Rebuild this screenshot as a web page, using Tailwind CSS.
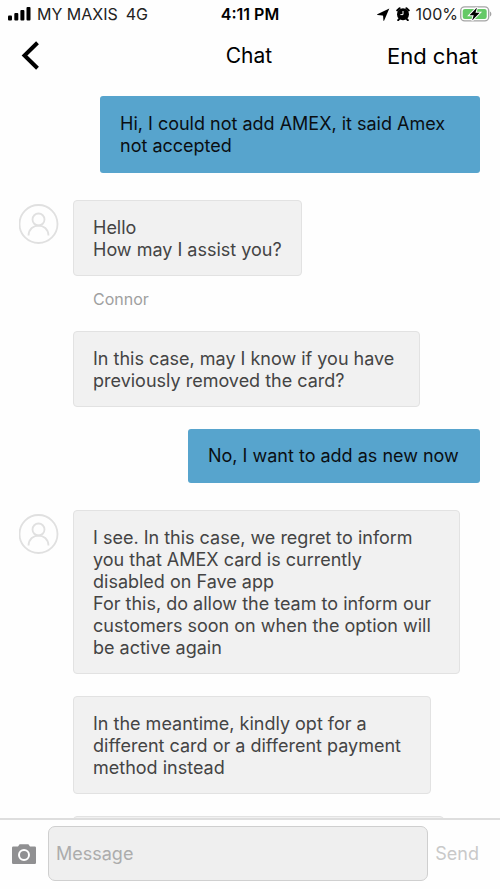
<!DOCTYPE html>
<html lang="en">
<head>
<meta charset="utf-8">
<meta name="viewport" content="width=device-width, initial-scale=1">
<title>Chat</title>
<script src="https://cdn.jsdelivr.net/npm/@tailwindcss/browser@4"></script>
</head>
<body class="flex h-screen flex-col overflow-hidden bg-[#fefefe] font-['Inter','Liberation_Sans',sans-serif] text-black">
  <div class="grid h-7 shrink-0 grid-cols-[1fr_auto_1fr] items-center px-2 text-base">
    <div class="flex items-center gap-[6px] text-[#222]">
      <svg class="h-[15px] w-[23px]" viewBox="0 0 23 15" fill="#000" aria-hidden="true"><rect x="0" y="8.500" width="4" height="5" rx="1"/><rect x="6.300" y="6" width="4" height="7.500" rx="1"/><rect x="12.400" y="3" width="4" height="10.500" rx="1"/><rect x="18.500" y="0" width="4" height="13.500" rx="1"/></svg>
      <span>MY MAXIS</span><span class="ml-[2px]">4G</span>
    </div>
    <div class="font-semibold">4:11 PM</div>
    <div class="flex items-center justify-end text-[#222]">
      <svg class="mr-[6px] h-[13px] w-[13px]" viewBox="0 0 13 13" aria-hidden="true"><path d="M12.300.5.300 6.300q-.4.600.3.700l4.900.4q.6 0 .6.600l.3 4.600q.2.600.8 0z" fill="#000"/></svg>
      <svg class="mr-[6px] h-[14px] w-[14px]" viewBox="0 0 14 14" aria-hidden="true"><circle cx="7" cy="7.300" r="6"/><path d="M1.200 3.400 3.600 1.200M12.800 3.400l-2.400-2.200M2.200 13.200l1.400-1.600M11.800 13.200l-1.400-1.600" stroke="#000" stroke-width="2" stroke-linecap="round"/><path d="M7 4v3.600H4.400" fill="none" stroke="#fff" stroke-width="1"/></svg>
      <span>100%</span>
      <svg class="ml-[2px] h-4 w-8" viewBox="0 0 32 16" aria-hidden="true"><rect x=".7" y=".9" width="28" height="14" rx="4" fill="#fff" stroke="#a4a4a4" stroke-width="1.400"/><rect x="2.700" y="2.900" width="24" height="10" rx="2.200" fill="#65c967"/><path d="M30 5.500c1.800.7 1.800 4.300 0 5z" fill="#a4a4a4"/><path d="m17 1.500-7.500 7.700h4.200l-1.600 5.300 7.600-7.700h-4.200z" fill="#000" stroke="#fff" stroke-width="2" paint-order="stroke"/></svg>
    </div>
  </div>

  <header class="grid h-14 shrink-0 grid-cols-[1fr_auto_1fr] items-center pr-[22px] pl-5 text-[22px]">
    <button type="button" aria-label="Back" class="justify-self-start">
      <svg class="h-8 w-6" viewBox="0 0 24 32" fill="none" stroke="#000" stroke-width="4" aria-hidden="true"><path d="M17.500 2.800 4.500 15.500l13 12.700"/></svg>
    </button>
    <h1 class="text-[21px]">Chat</h1>
    <button type="button" class="justify-self-end">End chat</button>
  </header>

  <main class="flex min-h-0 flex-1 flex-col gap-[22px] overflow-hidden px-5 pt-3 text-[18px] leading-[22px] text-[#444]">
    <p class="w-[380px] shrink-0 self-end rounded-[3px] bg-[#57a4cd] px-5 pt-[17px] pb-4 text-[#0a0e12]">Hi, I could not add AMEX, it said Amex<br>not accepted</p>

    <section class="mt-[5px] flex shrink-0 gap-[14px]">
      <svg class="mt-1 -ml-px h-10 w-10 shrink-0" viewBox="0 0 40 40" fill="none" stroke="#e0e0e0" stroke-width="1.800" role="img" aria-label="Agent"><circle cx="19.500" cy="20" r="19"/><circle cx="19.500" cy="15.500" r="6"/><path d="M9.500 31.500c.5-13.300 19.500-13.300 20 0"/></svg>
      <div class="flex flex-col items-start">
        <p class="rounded-[4px] border border-[#e2e2e2] bg-[#f1f1f1] px-[19px] pt-4 pb-[14px]">Hello<br>How may I assist you?</p>
        <span class="mt-3 mb-[21px] ml-5 text-[16px] text-[#a0a0a0]">Connor</span>
        <p class="w-[347px] rounded-[4px] border border-[#e2e2e2] bg-[#f1f1f1] px-[19px] pt-4 pb-[14px]">In this case, may I know if you have<br>previously removed the card?</p>
      </div>
    </section>

    <p class="w-[292px] shrink-0 self-end rounded-[3px] bg-[#57a4cd] px-5 pt-4 pb-4 text-[#0a0e12]">No, I want to add as new now</p>

    <section class="mt-[5px] flex shrink-0 gap-[14px]">
      <svg class="mt-1 -ml-px h-10 w-10 shrink-0" viewBox="0 0 40 40" fill="none" stroke="#e0e0e0" stroke-width="1.800" role="img" aria-label="Agent"><circle cx="19.500" cy="20" r="19"/><circle cx="19.500" cy="15.500" r="6"/><path d="M9.500 31.500c.5-13.300 19.500-13.300 20 0"/></svg>
      <div class="flex flex-col items-start gap-[22px]">
        <p class="w-[387px] rounded-[4px] border border-[#e2e2e2] bg-[#f1f1f1] px-[19px] pt-4 pb-[14px]">I see. In this case, we regret to inform<br>you that AMEX card is currently<br>disabled on Fave app<br>For this, do allow the team to inform our<br>customers soon on when the option will<br>be active again</p>
        <p class="w-[358px] rounded-[4px] border border-[#e2e2e2] bg-[#f1f1f1] px-[19px] pt-4 pb-[14px]">In the meantime, kindly opt for a<br>different card or a different payment<br>method instead</p>
        <div class="h-14 w-[371px] rounded-[4px] border border-[#e2e2e2] bg-[#f1f1f1]"></div>
      </div>
    </section>
  </main>

  <form class="flex h-[71px] shrink-0 items-center border-t-2 border-[#dedede] bg-[#fefefe] pr-[21px] pb-[2px] pl-3">
    <button type="button" aria-label="Attach photo" class="mr-3 shrink-0">
      <svg class="h-5 w-6" viewBox="0 0 24 20" aria-hidden="true"><path d="M1.200 2.500H6L7.600.3h8.800L18 2.500h4.800q1.200 0 1.200 1.200v15q0 1.200-1.200 1.200H1.200Q0 19.900 0 18.700v-15q0-1.200 1.200-1.200z" fill="#909092"/><circle cx="12" cy="11" r="5" fill="none" stroke="#fff" stroke-width="2"/></svg>
    </button>
    <input type="text" aria-label="Message" placeholder="Message" class="h-[55px] min-w-0 flex-1 rounded-[7px] border border-[#cfcfcf] bg-[#efefef] px-[7px] text-[18px] placeholder:text-[#acacac]">
    <button type="submit" class="ml-[7px] text-[18px] text-[#c9c9c9]">Send</button>
  </form>
</body>
</html>
